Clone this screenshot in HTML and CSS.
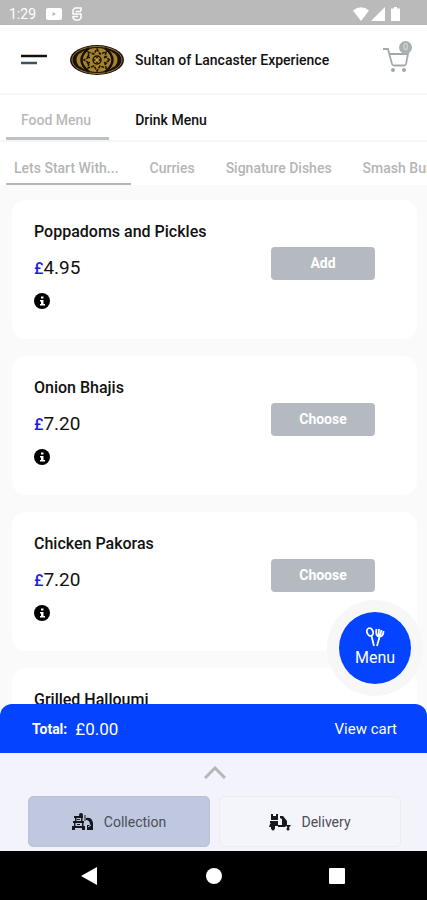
FILE: index.html
```html
<!DOCTYPE html>
<html lang="en">
<head>
    <meta charset="UTF-8">
    <meta name="viewport" content="width=device-width, initial-scale=1">
    <title>Sultan of Lancaster Experience</title>
    <link rel="stylesheet" href="styles.css">
</head>
<body>
<div class="screen">
    <div class="status-bar">
        <span class="clock">1:29</span>
        <svg width="16" height="12" viewBox="0 0 16 12"><rect width="16" height="12" rx="2" fill="#fff"/><path d="M6.500 4l3.500 2-3.500 2z" fill="#bababa"/></svg>
        <svg width="10" height="14" viewBox="0 0 10 14" fill="none" stroke="#fff" stroke-width="1.500"><path d="M9 4V1H3L1 3v4h8v4l-2 2H3l-2-2V9M3.500 4.500H9M1 9.500h5"/></svg>
        <div class="status-right">
            <svg width="16" height="14" viewBox="0 0 16 14" fill="#fff"><path d="M0 3.500Q8-3 16 3.500L8 14z"/></svg>
            <svg width="14" height="14" viewBox="0 0 14 14" fill="#fff"><path d="M14 0v14H0z"/></svg>
            <svg class="battery" width="9" height="14" viewBox="0 0 9 14" fill="#fff"><path d="M3 0h3v1.500h3V14H0V1.500h3z"/></svg>
        </div>
    </div>

    <header class="header">
        <button class="icon-button" type="button" aria-label="Open navigation">
            <svg width="26" height="12" viewBox="0 0 26 12"><path d="M0 2h26" stroke="#111" stroke-width="2.500"/><path d="M0 9h16" stroke="#41525d" stroke-width="2.500"/></svg>
        </button>
        <svg class="logo" width="54" height="30" viewBox="0 0 54 30" fill="none">
            <ellipse cx="27" cy="15" rx="27" ry="15" fill="#17130c"/>
            <ellipse cx="27" cy="15" rx="25" ry="13.500" stroke="#9c7426" stroke-width="1"/>
            <ellipse cx="27" cy="15" rx="20" ry="12" fill="#a9822c"/>
            <path d="M19 3Q4 15 19 27M35 3Q50 15 35 27" stroke="#17130c" stroke-width="2.500"/>
            <path d="M10 9Q5 15 10 21M44 9Q49 15 44 21" stroke="#a9822c" stroke-width="2"/>
            <g stroke="#17130c" stroke-width="1.500">
                <circle cx="27" cy="15" r="4"/>
                <path d="M27 4l3 5 6-2-1 5 5 3-5 3 1 5-6-2-3 5-3-5-6 2 1-5-5-3 5-3-1-5 6 2z" stroke-dasharray="3 1"/>
                <path d="M27 12v6M24 15h6M17 11l3 2M17 19l3-2M37 11l-3 2M37 19l-3-2"/>
            </g>
            <path d="M27 13l2 2-2 2-2-2z" fill="#cfa344"/>
        </svg>
        <h1 class="title">Sultan of Lancaster Experience</h1>
        <button class="icon-button cart" type="button" aria-label="Cart">
            <svg width="26" height="26" viewBox="0 0 26 26" fill="none" stroke="#a3a8aa" stroke-width="1.800"><path d="M0 2h5l4 15q.5 1.500 2 1.500h10q1.500 0 2-1.500L25 7H6.500"/><circle cx="10" cy="23" r="2" fill="#a3a8aa" stroke="none"/><circle cx="21" cy="23" r="2" fill="#a3a8aa" stroke="none"/></svg>
            <span class="badge">0</span>
        </button>
    </header>

    <nav class="menu-tabs">
        <a class="menu-tab active" href="#food">Food Menu</a>
        <a class="menu-tab" href="#drink">Drink Menu</a>
    </nav>
    <nav class="category-tabs">
        <a class="category-tab active" href="#start">Lets Start With...</a>
        <a class="category-tab" href="#curries">Curries</a>
        <a class="category-tab" href="#signature">Signature Dishes</a>
        <a class="category-tab" href="#burgers">Smash Burgers</a>
    </nav>

    <main class="dishes">
        <article class="card">
            <div>
                <h2 class="dish-name">Poppadoms and Pickles</h2>
                <p class="price"><span class="currency">£</span>4.95</p>
                <button class="info" type="button" aria-label="Dish information"><svg width="16" height="16" viewBox="0 0 16 16"><circle cx="8" cy="8" r="8"/><path d="M7 3.500h2.500v2H7zM6 7h3.500v4H11v1.500H6V11h1V8.500H6z" fill="#fff"/></svg></button>
            </div>
            <button class="action" type="button">Add</button>
        </article>
        <article class="card">
            <div>
                <h2 class="dish-name">Onion Bhajis</h2>
                <p class="price"><span class="currency">£</span>7.20</p>
                <button class="info" type="button" aria-label="Dish information"><svg width="16" height="16" viewBox="0 0 16 16"><circle cx="8" cy="8" r="8"/><path d="M7 3.500h2.500v2H7zM6 7h3.500v4H11v1.500H6V11h1V8.500H6z" fill="#fff"/></svg></button>
            </div>
            <button class="action" type="button">Choose</button>
        </article>
        <article class="card">
            <div>
                <h2 class="dish-name">Chicken Pakoras</h2>
                <p class="price"><span class="currency">£</span>7.20</p>
                <button class="info" type="button" aria-label="Dish information"><svg width="16" height="16" viewBox="0 0 16 16"><circle cx="8" cy="8" r="8"/><path d="M7 3.500h2.500v2H7zM6 7h3.500v4H11v1.500H6V11h1V8.500H6z" fill="#fff"/></svg></button>
            </div>
            <button class="action" type="button">Choose</button>
        </article>
        <article class="card">
            <h2 class="dish-name">Grilled Halloumi</h2>
        </article>
    </main>

    <footer class="footer">
        <button class="menu-fab" type="button">
            <svg width="20" height="20" viewBox="0 0 20 20" fill="none" stroke="#fff" stroke-width="1.800"><ellipse cx="5" cy="5" rx="3" ry="4" transform="rotate(-20 5 5)"/><path d="M6.500 9L9 19M12 19l2.500-9M11.500 2q-1.500 7 3 8 4-1 4-6M14 2l-.5 7M16.500 3L15 9"/></svg>
            Menu
        </button>
        <div class="total-bar">
            <span class="total-label">Total:</span>
            <span class="total">£0.00</span>
            <a class="view-cart" href="#cart">View cart</a>
        </div>
        <div class="sheet">
            <button class="expand" type="button" aria-label="Expand">
                <svg width="22" height="13" viewBox="0 0 22 13" fill="none" stroke="#b5b7bd" stroke-width="3"><path d="M1 12L11 2l10 10"/></svg>
            </button>
            <div class="modes">
                <button class="mode selected" type="button">
                    <svg width="22" height="18" viewBox="0 0 22 18" fill="#16181f"><path d="M2 3h9v2H2zM3 5h1.500v3H3zM9 5h1.500v3H9zM1 8h11v2H1zM2 10h1.500v3H2zM10 10h1.500v3H10zM0 13h13v2H0zM0 15h3v2H0zM10 15h3v2h-3zM5 6h3v1H5zM5 11h3v1H5z"/><circle cx="9" cy="2" r="2"/><path d="M14 5q6-1 7 5v7h-6v-5h3q0-5-4-5z"/><path d="M13 2v6" stroke="#16181f"/><path d="M16 14l3-2" stroke="#bfc8de"/></svg>
                    Collection
                </button>
                <button class="mode" type="button">
                    <svg width="22" height="18" viewBox="0 0 22 18" fill="#16181f"><path d="M2 1h7v6H2z"/><path d="M4 1h3v2H4z" fill="#fff"/><path d="M1 8h8v2H1zM2 10h7v3H6v3H2v-2H0l1-3zM11 3h3l4 5v4l-2 2H9v-2h4V6l-2-1zM17 12h5l-3 4z"/><circle cx="4" cy="16" r="1.500"/><circle cx="19" cy="16" r="1.500"/></svg>
                    Delivery
                </button>
            </div>
        </div>
        <div class="system-nav">
            <button class="icon-button" type="button" aria-label="Back"><svg width="18" height="18" viewBox="0 0 18 18" fill="#fff"><path d="M16 0v18L0 9z"/></svg></button>
            <button class="icon-button" type="button" aria-label="Home"><svg width="18" height="18" viewBox="0 0 18 18" fill="#fff"><circle cx="9" cy="9" r="8"/></svg></button>
            <button class="icon-button" type="button" aria-label="Recent apps"><svg width="18" height="18" viewBox="0 0 18 18" fill="#fff"><rect y="1" width="16" height="16" rx="1"/></svg></button>
        </div>
    </footer>
</div>
</body>
</html>
```
FILE: styles.css
```css
* {
    box-sizing: border-box;
}
body {
    margin: 0;
    font-family: Roboto, sans-serif;
    background: #fafafa;
    color: #111;
}
button {
    font-family: inherit;
    border: none;
    padding: 0;
    cursor: pointer;
}
a {
    text-decoration: none;
    color: inherit;
}
svg {
    display: block;
    flex-shrink: 0;
}
.screen {
    display: flex;
    flex-direction: column;
    height: 100vh;
    overflow: hidden;
}
.status-bar {
    display: flex;
    align-items: center;
    gap: 10px;
    height: 25px;
    padding: 2px 27px 0 9px;
    background: #bababa;
    color: #fff;
    flex-shrink: 0;
}
.clock {
    font-size: 14px;
}
.status-right {
    display: flex;
    gap: 2px;
    margin-left: auto;
}
.battery {
    margin-left: 4px;
}
.header {
    display: flex;
    align-items: center;
    height: 70px;
    padding: 2px 18px 0 21px;
    background: #fff;
    border-bottom: 2px solid #f8f8f8;
    flex-shrink: 0;
}
.icon-button {
    background: none;
}
.logo {
    margin: 0 11px 0 23px;
}
.title {
    margin: 0;
    font-size: 14px;
    font-weight: 500;
}
.cart {
    position: relative;
    margin-left: auto;
}
.badge {
    position: absolute;
    top: -6px;
    right: -3px;
    width: 13px;
    height: 13px;
    border-radius: 50%;
    background: #a9b1b3;
    color: #dfe3e4;
    font-size: 9px;
    line-height: 13px;
}
.menu-tabs {
    display: flex;
    height: 47px;
    padding-left: 6px;
    gap: 11px;
    background: #fff;
    border-bottom: 2px solid #f6f6f6;
    font-size: 14px;
    font-weight: 500;
    line-height: 50px;
    flex-shrink: 0;
}
.menu-tab {
    padding: 0 18px 0 15px;
}
.menu-tab.active {
    color: #b8babb;
    border-bottom: 3px solid #c0c3c5;
}
.category-tabs {
    display: flex;
    height: 43px;
    padding-left: 6px;
    gap: 11px;
    background: #fff;
    color: #b5b5b5;
    font-size: 14px;
    font-weight: 500;
    line-height: 52px;
    white-space: nowrap;
    overflow: hidden;
    flex-shrink: 0;
}
.category-tab {
    padding: 0 12px 0 8px;
}
.category-tab.active {
    border-bottom: 2px solid #b5b6b8;
}
.dishes {
    flex: 1;
    min-height: 0;
    overflow: hidden;
    display: flex;
    flex-direction: column;
    gap: 17px;
    padding: 15px 10px 0 12px;
}
.card {
    display: flex;
    justify-content: space-between;
    align-items: flex-start;
    height: 139px;
    padding: 22px 42px 0 22px;
    background: #fff;
    border-radius: 14px;
    flex-shrink: 0;
}
.dish-name {
    margin: 0;
    font-size: 16px;
    font-weight: 500;
    line-height: 20px;
}
.price {
    margin: 13px 0 11px;
    font-size: 19px;
    line-height: 26px;
}
.currency {
    color: #1c1cf0;
    font-size: 16px;
    font-weight: 500;
}
.info {
    display: block;
    background: none;
}
.action {
    width: 104px;
    height: 33px;
    margin-top: 25px;
    padding-bottom: 2px;
    border-radius: 4px;
    background: #b4bac0;
    color: #fff;
    font-size: 14px;
    font-weight: 700;
}
.footer {
    position: relative;
    margin-top: -12px;
    flex-shrink: 0;
}
.menu-fab {
    position: absolute;
    top: -92px;
    right: 16px;
    display: flex;
    flex-direction: column;
    align-items: center;
    justify-content: center;
    width: 72px;
    height: 72px;
    border-radius: 50%;
    background: #0443ff;
    box-shadow: 0 0 0 12px #f7f7f7;
    color: #fff;
    font-size: 16px;
    line-height: 22px;
}
.total-bar {
    position: relative;
    display: flex;
    align-items: center;
    gap: 8px;
    height: 49px;
    padding: 0 30px 0 32px;
    border-radius: 12px 12px 0 0;
    background: #0443ff;
    color: #fff;
}
.total-label {
    font-size: 14px;
    font-weight: 700;
}
.total {
    font-size: 17px;
}
.view-cart {
    margin-left: auto;
    font-size: 15px;
}
.sheet {
    padding: 13px 26px 4px 28px;
    background: #f3f4fb;
}
.expand {
    display: block;
    margin: 0 auto 17px;
    background: none;
}
.modes {
    display: flex;
    gap: 9px;
}
.mode {
    flex: 1;
    display: flex;
    align-items: center;
    justify-content: center;
    gap: 10px;
    height: 51px;
    border: 1px solid #ececf2;
    border-radius: 5px;
    background: #f4f5fb;
    color: #4b4e57;
    font-size: 14px;
}
.mode.selected {
    background: #bfc8de;
    border-color: #bac3d9;
}
.system-nav {
    display: flex;
    justify-content: center;
    align-items: center;
    gap: 106px;
    height: 49px;
    background: #000;
}
```
